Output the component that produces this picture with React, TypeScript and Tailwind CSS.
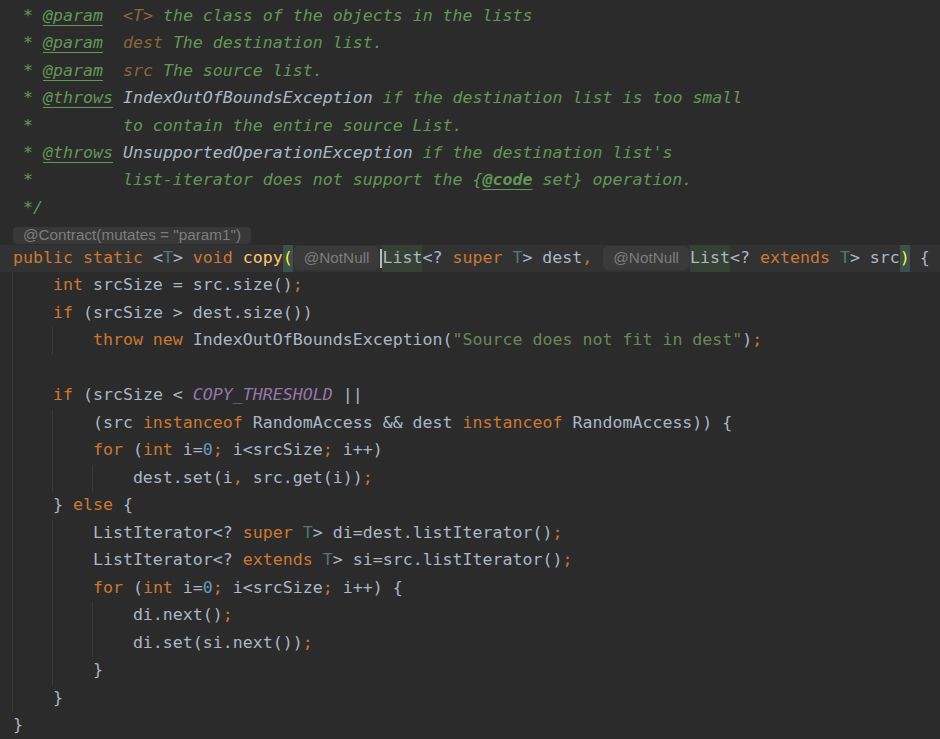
import React from 'react';

type Seg = [string, string?];

const kw = 'text-[#cc7832]';
const tx = 'text-[#a9b7c6]';
const tp = 'text-[#507874]';
const fn = 'text-[#ffc66d]';
const num = 'text-[#6897bb]';
const str = 'text-[#6a8759]';
const cst = 'text-[#9876aa] italic';
const dc = 'text-[#629755] italic';
const dtag = 'text-[#629755] italic underline underline-offset-[4px]';
const dcode = 'text-[#629755] italic font-bold underline underline-offset-[4px]';
const dpar = 'text-[#8a653b] italic';
const dref = 'text-[#a9b7c6] italic';
const brace = 'text-[#ffef28] bg-[#3b514d]';
const ident = 'text-[#a9b7c6] bg-[#344134]';

const docLines: Seg[][] = [
  [[' * ', dc], ['@param', dtag], ['  ', dc], ['<T>', dpar], [' the class of the objects in the lists', dc]],
  [[' * ', dc], ['@param', dtag], ['  ', dc], ['dest', dpar], [' The destination list.', dc]],
  [[' * ', dc], ['@param', dtag], ['  ', dc], ['src', dpar], [' The source list.', dc]],
  [[' * ', dc], ['@throws', dtag], [' ', dc], ['IndexOutOfBoundsException', dref], [' if the destination list is too small', dc]],
  [[' *         to contain the entire source List.', dc]],
  [[' * ', dc], ['@throws', dtag], [' ', dc], ['UnsupportedOperationException', dref], [" if the destination list's", dc]],
  [[' *         list-iterator does not support the {', dc], ['@code', dcode], [' set} operation.', dc]],
  [[' */', dc]],
];

const body: { segs: Seg[]; guides: number[] }[] = [
  { segs: [['    int', kw], [' srcSize = src.size()', tx], [';', kw]], guides: [0] },
  { segs: [['    if', kw], [' (srcSize > dest.size())', tx]], guides: [0] },
  { segs: [['        throw new', kw], [' IndexOutOfBoundsException(', tx], ['"Source does not fit in dest"', str], [')', tx], [';', kw]], guides: [0, 4] },
  { segs: [], guides: [0] },
  { segs: [['    if', kw], [' (srcSize < ', tx], ['COPY_THRESHOLD', cst], [' ||', tx]], guides: [0] },
  { segs: [['        (src ', tx], ['instanceof', kw], [' RandomAccess && dest ', tx], ['instanceof', kw], [' RandomAccess)) {', tx]], guides: [0, 4] },
  { segs: [['        for', kw], [' (', tx], ['int', kw], [' i=', tx], ['0', num], [';', kw], [' i<srcSize', tx], [';', kw], [' i++)', tx]], guides: [0, 4] },
  { segs: [['            dest.set(i', tx], [',', kw], [' src.get(i))', tx], [';', kw]], guides: [0, 4, 8] },
  { segs: [['    } ', tx], ['else', kw], [' {', tx]], guides: [0] },
  { segs: [['        ListIterator<? ', tx], ['super', kw], [' ', tx], ['T', tp], ['> di=dest.listIterator()', tx], [';', kw]], guides: [0, 4] },
  { segs: [['        ListIterator<? ', tx], ['extends', kw], [' ', tx], ['T', tp], ['> si=src.listIterator()', tx], [';', kw]], guides: [0, 4] },
  { segs: [['        for', kw], [' (', tx], ['int', kw], [' i=', tx], ['0', num], [';', kw], [' i<srcSize', tx], [';', kw], [' i++) {', tx]], guides: [0, 4] },
  { segs: [['            di.next()', tx], [';', kw]], guides: [0, 4, 8] },
  { segs: [['            di.set(si.next())', tx], [';', kw]], guides: [0, 4, 8] },
  { segs: [['        }', tx]], guides: [0, 4] },
  { segs: [['    }', tx]], guides: [0] },
  { segs: [['}', tx]], guides: [] },
];

const guideLeft: Record<number, string> = {
  0: 'left-[12px]',
  4: 'left-[52px]',
  8: 'left-[92px]',
};

function Segs({ segs }: { segs: Seg[] }) {
  return (
    <>
      {segs.map(([t, c], i) => (
        <span key={i} className={c}>
          {t}
        </span>
      ))}
    </>
  );
}

function Hint({ children }: { children: React.ReactNode }) {
  return (
    <span className="inline-flex items-center h-[24px] mx-[1px] px-[10px] rounded-[5px] bg-[#3a3a3a] text-[#7d7d7d] text-[15.3px] font-['Liberation_Sans',Arial,sans-serif]">
      {children}
    </span>
  );
}

export default function App() {
  return (
    <div className="w-[940px] h-[739px] overflow-hidden bg-[#2b2b2b] pt-[2.6px] font-['DejaVu_Sans_Mono',monospace] text-[16.6px] text-[#a9b7c6]">
      {docLines.map((segs, i) => (
        <div key={i} className="h-[27.45px] flex items-center pl-[13px] whitespace-pre">
          <Segs segs={segs} />
        </div>
      ))}

      <div className="h-[22.5px] flex items-end pb-[0.5px] pl-[13px]">
        <span className="inline-flex items-center h-[17px] px-[10px] rounded-[4px] bg-[#383838] text-[#7d7d7d] text-[15.3px] font-['Liberation_Sans',Arial,sans-serif]">
          @Contract(mutates = "param1")
        </span>
      </div>

      <div className="h-[27.5px] flex items-center pl-[13px] whitespace-pre bg-[#323232]">
        <span className={kw}>public static </span>
        <span className={tx}>&lt;</span>
        <span className={tp}>T</span>
        <span className={tx}>&gt; </span>
        <span className={kw}>void </span>
        <span className={fn}>copy</span>
        <span className={`${brace} self-stretch flex items-center`}>(</span>
        <Hint>@NotNull</Hint>
        <span className="self-stretch w-[2px] bg-[#bbbbbb] my-[4px]" />
        <span className={`${ident} self-stretch flex items-center`}>List</span>
        <span className={tx}>&lt;? </span>
        <span className={kw}>super </span>
        <span className={tp}>T</span>
        <span className={tx}>&gt; dest</span>
        <span className={kw}>, </span>
        <Hint>@NotNull</Hint>
        <span className={`${ident} self-stretch flex items-center`}>List</span>
        <span className={tx}>&lt;? </span>
        <span className={kw}>extends </span>
        <span className={tp}>T</span>
        <span className={tx}>&gt; src</span>
        <span className={`${brace} self-stretch flex items-center`}>)</span>
        <span className={tx}> {'{'}</span>
      </div>

      {body.map((line, i) => (
        <div key={i} className="relative h-[27.5px] flex items-center pl-[13px] whitespace-pre">
          {line.guides.map((g) => (
            <span key={g} className={`absolute top-0 bottom-0 w-px bg-[#393939] ${guideLeft[g]}`} />
          ))}
          <Segs segs={line.segs} />
        </div>
      ))}
    </div>
  );
}
